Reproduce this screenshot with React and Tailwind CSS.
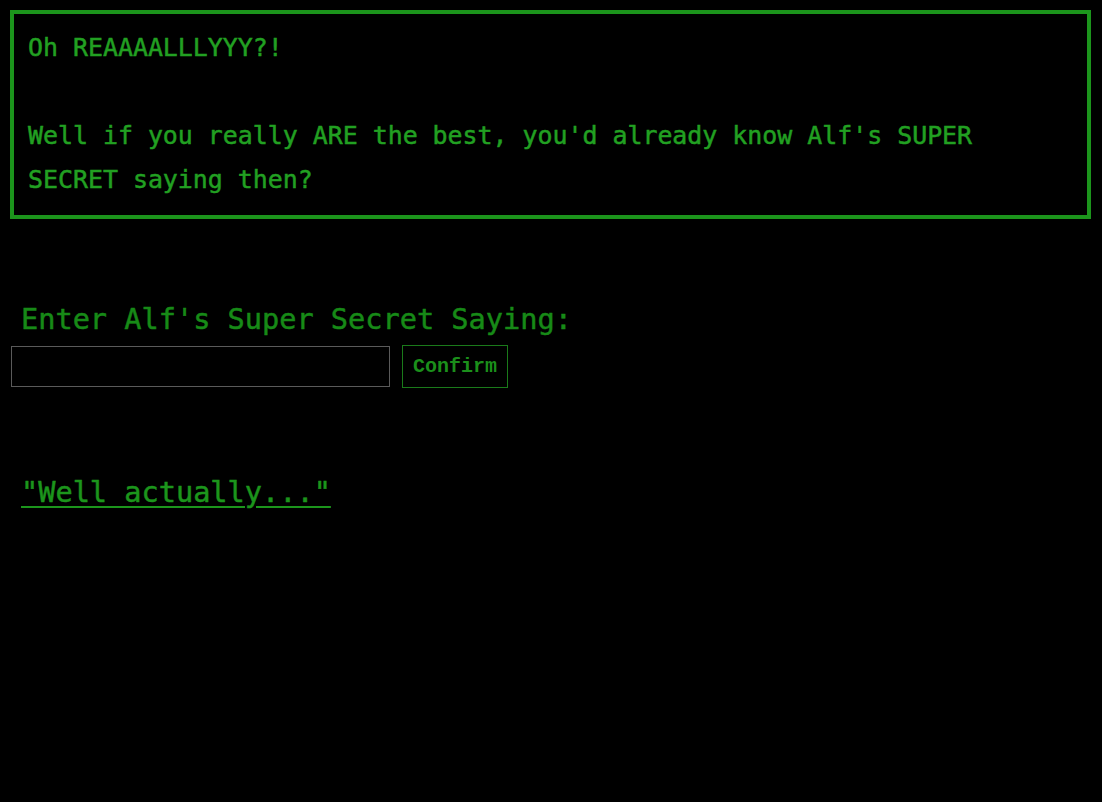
export default function App() {
  return (
    <div className="min-h-[802px] bg-black pt-[10px] pl-[10px] pr-[11px]">
      {/* message box */}
      <div className="border-4 border-[#1c951c] pl-[14px] pr-[12px] pt-[12px] pb-[13px] font-['DejaVu_Sans_Mono',monospace] text-[24.9px] leading-[44px] text-[#22a022] [-webkit-text-stroke:0.5px_#22a022]">
        Oh REAAAALLLYYY?!
        <br />
        <br />
        Well if you really ARE the best, you'd already know Alf's SUPER SECRET saying then?
      </div>

      {/* secret form */}
      <div className="mt-[80px] font-['DejaVu_Sans_Mono',monospace]">
        <h2 className="ml-[11px] text-[28.6px] leading-[40px] text-[#178a17] [-webkit-text-stroke:0.5px_#178a17]">
          Enter Alf's Super Secret Saying:
        </h2>
        <div className="mt-[6px] flex items-center gap-[12px] pl-[1px]">
          <input
            type="text"
            className="h-[41px] w-[379px] border border-[#5a5a5a] bg-black px-2 text-[20px] text-[#22a022] outline-none"
          />
          <button className="h-[43px] w-[106px] border border-[#1a7a1a] bg-black font-['Liberation_Mono',monospace] text-[20px] font-bold text-[#1b8f1b]">
            Confirm
          </button>
        </div>
        <div className="mt-[84px] ml-[11px]">
          <a
            href="#"
            className="text-[28.6px] leading-[40px] text-[#1c951c] underline underline-offset-4 [-webkit-text-stroke:0.5px_#1c951c]"
          >
            "Well actually..."
          </a>
        </div>
      </div>
    </div>
  )
}
